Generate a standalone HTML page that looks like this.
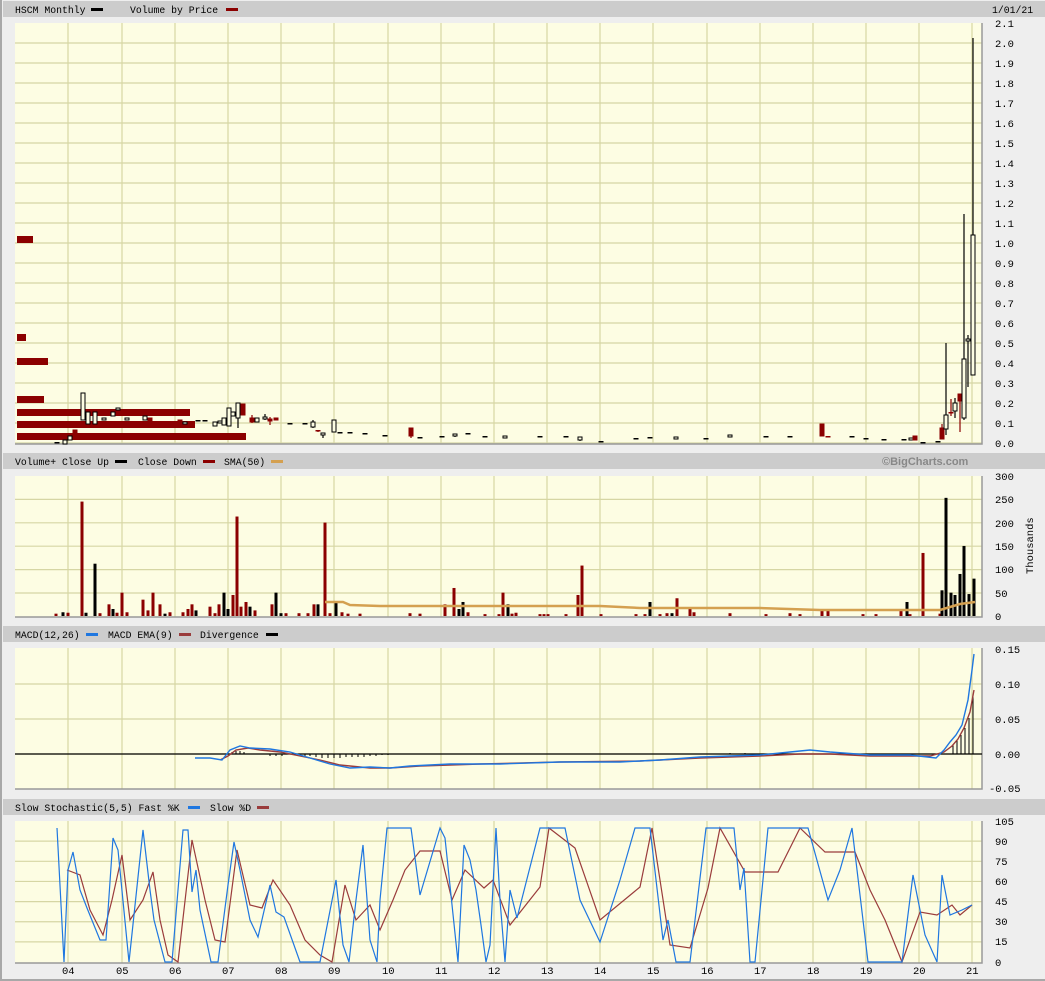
<!DOCTYPE html>
<html><head><meta charset="utf-8">
<style>
html,body{margin:0;padding:0;}
body{width:1045px;height:981px;background:#eeeeee;position:relative;overflow:hidden;font-family:"Liberation Mono","DejaVu Sans Mono",monospace;}
svg{position:absolute;left:0;top:0;}
</style></head><body>
<svg id="s" width="1045" height="981" xmlns="http://www.w3.org/2000/svg" font-family="Liberation Mono, DejaVu Sans Mono, monospace" font-size="10.5">
<rect x="0" y="0" width="2" height="981" fill="#a8a8a8"/>
<rect x="0" y="979" width="1045" height="2" fill="#a8a8a8"/>
<rect x="3" y="1" width="1042" height="16" fill="#cccccc"/>
<rect x="3" y="453" width="1042" height="16" fill="#cccccc"/>
<rect x="3" y="626" width="1042" height="16" fill="#cccccc"/>
<rect x="3" y="799" width="1042" height="16" fill="#cccccc"/>
<g fill="#000" font-size="9.8">
<text x="15" y="13">HSCM Monthly</text><rect x="91" y="8" width="12" height="3"/>
<text x="130" y="13">Volume by Price</text><rect x="226" y="8" width="12" height="3" fill="#8b0000"/>
<text x="992" y="13">1/01/21</text>
<text x="15" y="465">Volume+ Close Up</text><rect x="115" y="460" width="12" height="3"/>
<text x="138" y="465">Close Down</text><rect x="203" y="460" width="12" height="3" fill="#8b0000"/>
<text x="224" y="465">SMA(50)</text><rect x="271" y="460" width="12" height="3" fill="#d4a050"/>
<text x="882" y="465" fill="#888" font-family="Liberation Sans, sans-serif" font-weight="bold" font-size="11">©BigCharts.com</text>
<text x="15" y="638">MACD(12,26)</text><rect x="86" y="633" width="12" height="3" fill="#1f77e0"/>
<text x="108" y="638">MACD EMA(9)</text><rect x="179" y="633" width="12" height="3" fill="#9a3c3c"/>
<text x="200" y="638">Divergence</text><rect x="266" y="633" width="12" height="3"/>
<text x="15" y="811">Slow Stochastic(5,5) Fast %K</text><rect x="188" y="806" width="12" height="3" fill="#1f77e0"/>
<text x="210" y="811">Slow %D</text><rect x="257" y="806" width="12" height="3" fill="#9a3c3c"/>
</g>
<g fill="#fdfde3">
<rect x="15" y="23" width="967" height="421"/>
<rect x="15" y="476" width="967" height="141"/>
<rect x="15" y="648" width="967" height="141"/>
<rect x="15" y="821" width="967" height="142"/>
</g>
<g id="grid" stroke="#d6d6a4" stroke-width="1.2" fill="none"></g>
<g stroke="#999" stroke-width="1.5" fill="none">
<polyline points="982,23 982,444 15,444"/>
<polyline points="982,476 982,617 15,617"/>
<polyline points="982,648 982,789 15,789"/>
<polyline points="982,821 982,963 15,963"/>
</g>
<g id="data"></g>
<g fill="#000" font-size="10.5">
<text x="995" y="27">2.1</text><text x="995" y="47">2.0</text><text x="995" y="67">1.9</text><text x="995" y="87">1.8</text><text x="995" y="107">1.7</text><text x="995" y="127">1.6</text><text x="995" y="147">1.5</text><text x="995" y="167">1.4</text><text x="995" y="187">1.3</text><text x="995" y="207">1.2</text><text x="995" y="227">1.1</text><text x="995" y="247">1.0</text><text x="995" y="267">0.9</text><text x="995" y="287">0.8</text><text x="995" y="307">0.7</text><text x="995" y="327">0.6</text><text x="995" y="347">0.5</text><text x="995" y="367">0.4</text><text x="995" y="387">0.3</text><text x="995" y="407">0.2</text><text x="995" y="427">0.1</text><text x="995" y="447">0.0</text>
<text x="995" y="480">300</text><text x="995" y="503">250</text><text x="995" y="527">200</text><text x="995" y="550">150</text><text x="995" y="573">100</text><text x="995" y="597">50</text><text x="995" y="620">0</text>
<text transform="translate(1033,574) rotate(-90)">Thousands</text>
<text x="995" y="653">0.15</text><text x="995" y="688">0.10</text><text x="995" y="723">0.05</text><text x="995" y="758">0.00</text><text x="989" y="792">-0.05</text>
<text x="995" y="825">105</text><text x="995" y="845">90</text><text x="995" y="865">75</text><text x="995" y="885">60</text><text x="995" y="905">45</text><text x="995" y="925">30</text><text x="995" y="945">15</text><text x="995" y="966">0</text>
<text x="62" y="974">04</text><text x="116" y="974">05</text><text x="169" y="974">06</text><text x="222" y="974">07</text><text x="275" y="974">08</text><text x="328" y="974">09</text><text x="382" y="974">10</text><text x="435" y="974">11</text><text x="488" y="974">12</text><text x="541" y="974">13</text><text x="594" y="974">14</text><text x="647" y="974">15</text><text x="701" y="974">16</text><text x="754" y="974">17</text><text x="807" y="974">18</text><text x="860" y="974">19</text><text x="913" y="974">20</text><text x="966" y="974">21</text>
</g>
</svg>
<script>
var NS="http://www.w3.org/2000/svg";
function el(p,t,a){var e=document.createElementNS(NS,t);for(var k in a)e.setAttribute(k,a[k]);p.appendChild(e);return e;}
var g=document.getElementById("grid"),d=document.getElementById("data");
var xs=[68,122,175,228,281,334,388,441,494,547,600,653,707,760,813,866,919,972];
var panels=[[23,444],[476,617],[648,789],[821,963]];
panels.forEach(function(p){xs.forEach(function(x){el(g,"line",{x1:x,y1:p[0],x2:x,y2:p[1]});});});
for(var y=43;y<444;y+=20)el(g,"line",{x1:15,y1:y,x2:982,y2:y});
for(var i=1;i<6;i++){var y=476+i*23.4;el(g,"line",{x1:15,y1:y,x2:982,y2:y});}
for(var i=1;i<4;i++){var y=649+i*35;el(g,"line",{x1:15,y1:y,x2:982,y2:y});}
for(var i=1;i<7;i++){var y=821+i*20.15;el(g,"line",{x1:15,y1:y,x2:982,y2:y});}
[[236,33],[334,26],[358,48],[396,44],[409,190],[421,195],[433,246]].forEach(function(b){el(d,"rect",{x:17,y:b[0],width:b[1]-17,height:7,fill:"#8b0000"});});
var vb=[[56,5,1],[63,8,0],[68,7,1],[82,245,1],[86,7,0],[95,112,0],[100,6,1],[109,25,1],[113,15,0],[117,7,1],[122,50,1],[127,8,1],[143,35,1],[148,12,1],[153,50,1],[160,25,1],[165,5,0],[170,8,1],[183,8,1],[188,15,1],[192,25,1],[196,12,0],[210,20,1],[215,6,1],[219,25,1],[224,50,0],[228,15,0],[233,45,1],[237,213,1],[241,20,1],[246,30,1],[250,20,0],[255,12,1],[272,25,1],[276,50,0],[281,6,0],[286,6,1],[299,6,1],[308,6,1],[314,25,1],[318,25,0],[325,200,1],[330,6,1],[336,30,0],[342,8,1],[348,5,1],[360,5,1],[410,6,1],[420,5,1],[445,25,1],[454,60,1],[459,15,0],[463,30,0],[468,8,1],[485,4,1],[499,4,1],[503,50,1],[508,25,0],[512,5,1],[516,7,1],[540,4,1],[544,4,1],[548,4,1],[566,4,1],[578,45,1],[582,108,1],[601,4,1],[636,4,1],[645,4,1],[650,30,0],[660,4,1],[667,6,1],[672,6,0],[677,38,1],[690,15,1],[694,8,1],[730,6,1],[766,4,1],[790,6,1],[800,4,1],[822,15,1],[828,15,1],[863,4,1],[876,4,1],[901,15,1],[907,30,0],[910,4,1],[923,135,1],[940,5,1],[942,55,0],[946,253,0],[951,50,0],[955,45,0],[960,90,0],[964,150,0],[969,47,0],[974,80,0]];
vb.forEach(function(b){var h=b[1]*0.467;el(d,"rect",{x:b[0]-1.5,y:616-h,width:3,height:h,fill:b[2]?"#8b0000":"#000"});});
el(d,"polyline",{points:"325,602 343,602 350,605 380,606 600,606 640,608 700,608 760,608 820,610 940,610 950,607 960,604 975,602",fill:"none",stroke:"#d4a050","stroke-width":2.5});
var cd=[[57,442,442,442,442],[65,440,444,440,444],[70,436,440,436,440],[75,430,434,430,434],[83,393,420,393,420],[88,412,424,412,424],[95,412,424,412,424],[104,418,420,418,420],[113,412,416,412,416],[118,408,410,408,410],[127,418,420,418,420],[135,410,412,410,412],[145,416,420,416,420],[150,418,422,418,422],[180,420,422,420,422],[185,422,424,422,424],[198,420,420,420,420],[205,420,420,420,420],[215,422,426,422,426],[220,421,423,421,423],[224,418,425,418,425],[229,408,426,408,426],[233,412,416,412,416],[238,403,418,403,428],[243,404,415,404,415],[252,418,422,415,423],[257,418,422,418,422],[265,417,419,414,420],[270,419,421,417,425],[276,418,420,418,420],[290,423,423,423,423],[305,423,423,423,423],[313,422,427,420,428],[318,430,431,430,432],[323,433,435,433,438],[334,420,432,420,432],[340,432,432,432,432],[350,432,432,432,432],[365,433,433,433,433],[385,435,435,435,435],[411,428,436,428,438],[420,437,437,437,437],[442,436,436,436,436],[455,434,436,434,437],[468,433,433,433,433],[485,436,436,436,436],[505,436,438,436,438],[540,436,436,436,436],[566,436,436,436,436],[580,437,440,437,441],[601,441,441,441,441],[636,438,438,438,438],[650,437,438,437,438],[676,437,439,437,439],[706,438,438,438,438],[730,435,437,435,437],[766,436,436,436,436],[790,436,436,436,436],[822,424,436,424,436],[828,436,437,436,437],[852,436,436,436,436],[866,438,438,438,438],[884,439,439,439,439],[904,439,439,439,439],[911,438,440,438,440],[915,436,440,436,440],[923,442,443,442,443],[938,441,441,441,441],[942,428,439,424,439],[946,415,429,343,435],[951,412,413,399,416],[955,403,411,398,418],[960,394,401,394,432],[964,359,418,214,420],[968,339,341,335,387],[973,235,375,38,375]];
cd.forEach(function(c){var x=c[0],t=Math.min(c[1],c[2]),b=Math.max(c[1],c[2]);var red=(c[1]<c[2]&&c[0]%3==0);var col=red?"#8b0000":"#000";
el(d,"line",{x1:x,y1:c[3],x2:x,y2:c[4],stroke:col,"stroke-width":1.2});
if(b-t<2)el(d,"rect",{x:x-2.5,y:t,width:5,height:1.5,fill:col});else el(d,"rect",{x:x-2,y:t,width:4,height:b-t,fill:red?"#8b0000":"#fdfde3",stroke:col,"stroke-width":1});});
el(d,"line",{x1:15,y1:754,x2:982,y2:754,stroke:"#000","stroke-width":1.3});
var div=[[232,752],[236,751],[240,751],[244,752],[270,756],[276,756],[282,756],[300,756],[305,757],[310,756],[316,757],[322,758],[328,758],[334,758],[340,758],[346,757],[352,757],[358,757],[364,757],[370,756],[376,756],[382,755],[388,755],[730,753],[745,753],[953,745],[957,740],[961,735],[965,728],[969,718],[973,694]];
div.forEach(function(v){el(d,"line",{x1:v[0],y1:754,x2:v[0],y2:v[1],stroke:"#000","stroke-width":1});});
el(d,"polyline",{points:"220,760 228,756 236,750 248,748 260,750 280,752 300,756 320,760 340,765 370,768 390,768 420,766 480,764 560,762 640,761 700,758 760,756 800,754 830,754 870,756 930,756 944,752 952,746 958,739 964,728 970,712 974,690",fill:"none",stroke:"#9a3c3c","stroke-width":1.4});
el(d,"polyline",{points:"195,758 210,758 222,760 230,750 240,746 250,748 270,749 290,752 310,758 330,764 350,768 370,767 390,768 410,766 450,764 500,764 560,762 620,762 660,760 700,757 760,755 790,752 810,750 830,752 870,755 910,755 936,758 944,750 950,742 956,735 962,725 968,700 972,670 974,654",fill:"none",stroke:"#1f77e0","stroke-width":1.4});
el(d,"polyline",{points:"67,870 80,875 90,910 103,935 112,900 122,855 130,920 143,900 153,872 160,920 168,955 178,962 192,840 205,900 215,940 225,942 237,850 250,905 262,908 273,880 290,905 305,940 320,955 332,962 345,885 356,920 370,905 380,930 393,900 405,870 420,851 440,851 452,900 465,870 484,888 493,880 510,925 540,887 549,828 575,848 600,920 640,887 652,828 670,945 690,948 708,888 720,828 745,872 778,872 800,828 825,852 855,852 870,890 885,920 902,962 920,912 937,915 952,905 960,915 972,905",fill:"none",stroke:"#9a3c3c","stroke-width":1.2});
el(d,"polyline",{points:"57,828 64,962 68,870 73,852 80,890 87,908 100,940 106,940 113,838 118,850 129,962 143,830 150,890 154,920 165,962 172,962 183,830 188,830 192,892 196,870 200,910 211,962 218,962 228,885 234,842 240,870 250,920 258,937 270,885 276,912 284,917 300,962 320,962 336,880 343,945 349,962 356,900 363,845 370,940 377,962 380,900 387,828 411,828 420,895 440,828 445,838 458,962 464,845 470,860 476,890 481,925 486,962 490,945 496,828 500,900 505,962 510,890 517,918 540,828 565,828 580,900 600,942 620,880 635,828 650,828 663,940 668,920 676,962 690,962 706,828 734,828 740,890 744,868 750,962 755,962 768,828 808,828 828,900 840,870 852,828 868,962 902,962 913,875 925,935 937,962 942,875 950,915 962,910 972,905",fill:"none",stroke:"#1f77e0","stroke-width":1.2});
</script>
</body></html>
